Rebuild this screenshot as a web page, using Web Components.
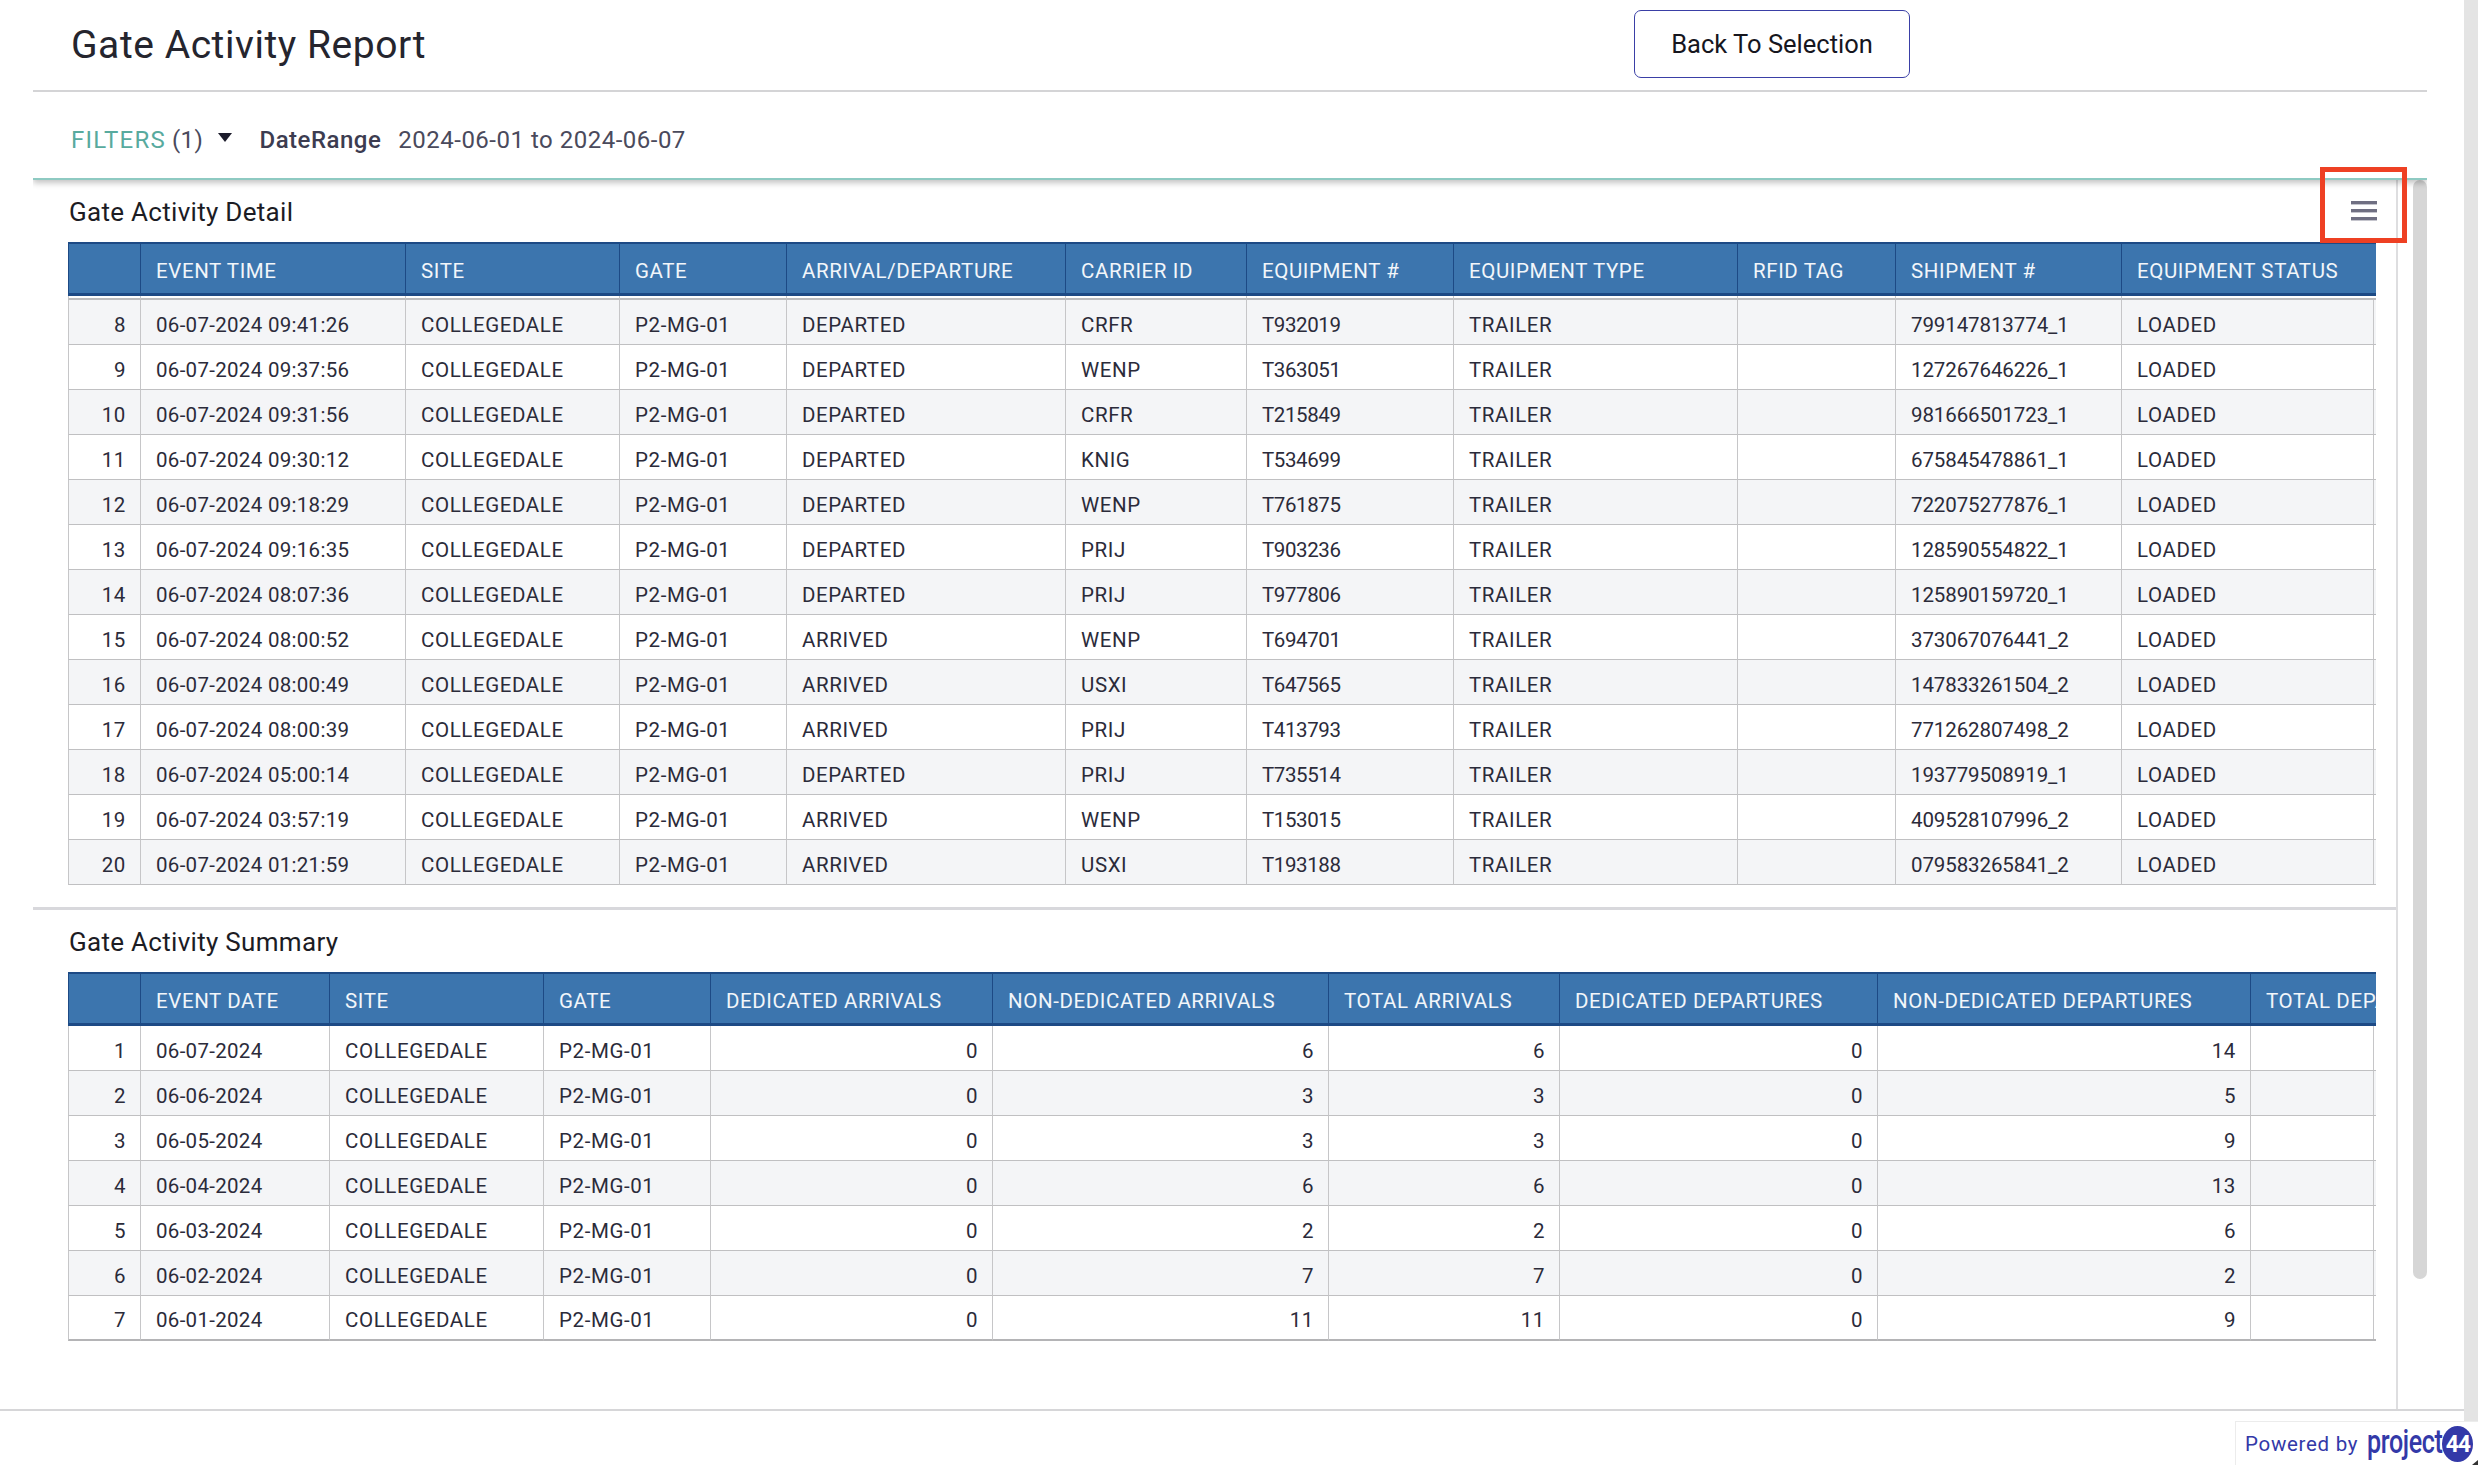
<!DOCTYPE html>
<html>
<head>
<meta charset="utf-8">
<title>Gate Activity Report</title>
<style>
    html, body { margin: 0; padding: 0; background: #fff; }
    body { font-family: Roboto, "Liberation Sans", sans-serif; color: #2b2b3a; overflow: hidden; }
</style>
</head>
<body>
<report-page></report-page>
<script>
const detailColumns = [
    { title: '', width: 72, num: true },
    { title: 'EVENT TIME', width: 265, ls: 0.3 },
    { title: 'SITE', width: 214 },
    { title: 'GATE', width: 167 },
    { title: 'ARRIVAL/DEPARTURE', width: 279 },
    { title: 'CARRIER ID', width: 181 },
    { title: 'EQUIPMENT #', width: 207, ls: -0.4 },
    { title: 'EQUIPMENT TYPE', width: 284 },
    { title: 'RFID TAG', width: 158 },
    { title: 'SHIPMENT #', width: 226, ls: -0.1 },
    { title: 'EQUIPMENT STATUS', width: 255 }
]
const detailRows = [
    ['8', '09:41:26', 'DEPARTED', 'CRFR', 'T932019', '799147813774_1'],
    ['9', '09:37:56', 'DEPARTED', 'WENP', 'T363051', '127267646226_1'],
    ['10', '09:31:56', 'DEPARTED', 'CRFR', 'T215849', '981666501723_1'],
    ['11', '09:30:12', 'DEPARTED', 'KNIG', 'T534699', '675845478861_1'],
    ['12', '09:18:29', 'DEPARTED', 'WENP', 'T761875', '722075277876_1'],
    ['13', '09:16:35', 'DEPARTED', 'PRIJ', 'T903236', '128590554822_1'],
    ['14', '08:07:36', 'DEPARTED', 'PRIJ', 'T977806', '125890159720_1'],
    ['15', '08:00:52', 'ARRIVED', 'WENP', 'T694701', '373067076441_2'],
    ['16', '08:00:49', 'ARRIVED', 'USXI', 'T647565', '147833261504_2'],
    ['17', '08:00:39', 'ARRIVED', 'PRIJ', 'T413793', '771262807498_2'],
    ['18', '05:00:14', 'DEPARTED', 'PRIJ', 'T735514', '193779508919_1'],
    ['19', '03:57:19', 'ARRIVED', 'WENP', 'T153015', '409528107996_2'],
    ['20', '01:21:59', 'ARRIVED', 'USXI', 'T193188', '079583265841_2']
].map(r => [r[0], '06-07-2024 ' + r[1], 'COLLEGEDALE', 'P2-MG-01', r[2], r[3], r[4], 'TRAILER', '', r[5], 'LOADED'])

const summaryColumns = [
    { title: '', width: 72, num: true },
    { title: 'EVENT DATE', width: 189, ls: 0.3 },
    { title: 'SITE', width: 214 },
    { title: 'GATE', width: 167 },
    { title: 'DEDICATED ARRIVALS', width: 282, num: true },
    { title: 'NON-DEDICATED ARRIVALS', width: 336, num: true },
    { title: 'TOTAL ARRIVALS', width: 231, num: true },
    { title: 'DEDICATED DEPARTURES', width: 318, num: true },
    { title: 'NON-DEDICATED DEPARTURES', width: 373, num: true },
    { title: 'TOTAL DEPARTURES', width: 126, num: true }
]
const summaryRows = [
    ['1', '06-07-2024', '0', '6', '6', '0', '14'],
    ['2', '06-06-2024', '0', '3', '3', '0', '5'],
    ['3', '06-05-2024', '0', '3', '3', '0', '9'],
    ['4', '06-04-2024', '0', '6', '6', '0', '13'],
    ['5', '06-03-2024', '0', '2', '2', '0', '6'],
    ['6', '06-02-2024', '0', '7', '7', '0', '2'],
    ['7', '06-01-2024', '0', '11', '11', '0', '9']
].map(r => [r[0], r[1], 'COLLEGEDALE', 'P2-MG-01', r[2], r[3], r[4], r[5], r[6], ''])

class ReportHeader extends HTMLElement{
    constructor(){
        super()
        this.attachShadow({mode : 'open'})
    }
    connectedCallback(){
        this.shadowRoot.innerHTML = `
            <style>
                :host{
                    display: flex;
                    height: 92px;
                    box-sizing: border-box;
                    border-bottom: 2px solid #d4d4d6;
                    padding-left: 38px;
                    padding-right: 517px;
                    align-items: center;
                    justify-content: space-between;
                }
                h1{
                    margin: 0;
                    font-size: 39px;
                    font-weight: 400;
                    letter-spacing: 0.55px;
                    color: #25252e;
                }
                button{
                    width: 276px;
                    height: 68px;
                    margin-bottom: 2px;
                    background: #fff;
                    border: 1.5px solid #3a3fa6;
                    border-radius: 7px;
                    font: 400 25.5px Roboto, sans-serif;
                    color: #16161e;
                    padding: 0;
                }
            </style>
            <h1>Gate Activity Report</h1>
            <button>Back To Selection</button>
        `
    }
}

class FilterBar extends HTMLElement{
    constructor(){
        super()
        this.attachShadow({mode : 'open'})
    }
    connectedCallback(){
        this.shadowRoot.innerHTML = `
            <style>
                :host{
                    display: flex;
                    position: relative;
                    height: 88px;
                    box-sizing: border-box;
                    border-bottom: 2px solid #8ecac2;
                    box-shadow: 0 3px 6px rgba(0,0,0,.24);
                    clip-path: inset(0 0 -12px 0);
                    background: #fff;
                    padding-left: 38px;
                    padding-top: 9px;
                    align-items: center;
                    font-size: 24px;
                    letter-spacing: 0.5px;
                    color: #4a4a5c;
                }
                .label{ color: #58aa9e; letter-spacing: 1.2px; }
                .count{ margin-left: 6px; }
                .arrow{
                    width: 0;
                    height: 0;
                    margin: 0 27px 4px 15px;
                    border-left: 7px solid transparent;
                    border-right: 7px solid transparent;
                    border-top: 9px solid #1c1c2c;
                }
                .name{ font-weight: 500; color: #3c3c50; margin-right: 17px; }
            </style>
            <span class="label">FILTERS</span>
            <span class="count">(1)</span>
            <span class="arrow"></span>
            <span class="name">DateRange</span>
            <span>2024-06-01 to 2024-06-07</span>
        `
    }
}

class MenuButton extends HTMLElement{
    constructor(){
        super()
        this.attachShadow({mode : 'open'})
    }
    connectedCallback(){
        this.shadowRoot.innerHTML = `
            <style>
                :host{
                    display: block;
                    position: relative;
                    width: 26px;
                    height: 20px;
                    margin-right: -1px;
                    margin-top: -1px;
                }
                svg{ display: block; }
                .mark{
                    position: absolute;
                    left: -31px;
                    top: -34px;
                    width: 87px;
                    height: 76px;
                    box-sizing: border-box;
                    border: 5px solid #ee4023;
                }
            </style>
            <svg width="26" height="20" viewBox="0 0 26 20">
                <rect x="0" y="0" width="26" height="3.4" fill="#6f6f82"/>
                <rect x="0" y="8" width="26" height="3.4" fill="#6f6f82"/>
                <rect x="0" y="16" width="26" height="3.4" fill="#6f6f82"/>
            </svg>
            <div class="mark"></div>
        `
    }
}

class DataGrid extends HTMLElement{
    constructor(){
        super()
        this.attachShadow({mode : 'open'})
    }
    set config(value){
        this._config = value
        this.render()
    }
    getStyles(){
        return `
            <style>
                :host{
                    display: block;
                    width: 2308px;
                    overflow: hidden;
                }
                table{
                    border-collapse: separate;
                    border-spacing: 0;
                    table-layout: fixed;
                    width: 2308px;
                    font-size: 20.5px;
                    letter-spacing: 0.6px;
                    color: #2b2b3a;
                }
                th, td{
                    box-sizing: border-box;
                    padding: 0 14px 0 15px;
                    white-space: nowrap;
                    overflow: hidden;
                    font-weight: 400;
                    text-align: left;
                }
                th{
                    background: #3c75ae;
                    color: #f2f6fa;
                    border-top: 2px solid #1d4a85;
                    border-bottom: 3px solid #1d4a85;
                    border-left: 1px solid #1d4a85;
                    padding-top: 5px;
                    padding-right: 0;
                }
                td{
                    height: 45px;
                    padding-top: 5px;
                    border-bottom: 1.5px solid #c0c0c2;
                    border-left: 1px solid #c6c6c8;
                }
                td.num{ text-align: right; }
                tr.stripe td{ background-color: #f4f5f7; }
                td.last{
                    background-image: linear-gradient(#c6c6c8, #c6c6c8);
                    background-size: 1px 100%;
                    background-position: right 2px top;
                    background-repeat: no-repeat;
                }
                tr.gap td{
                    height: ${this._config.gap}px;
                    padding: 0;
                    border-bottom: 2px solid #bcbcbe;
                }
                tr.end td{ border-bottom: 2px solid #b4b4b6; }
            </style>
        `
    }
    render(){
        const { columns, rows, headHeight, gap } = this._config
        const cols = columns.map(c => `<col style="width:${c.width}px">`).join('')
        const head = columns.map(c => `<th style="height:${headHeight}px">${c.title}</th>`).join('')
        const spacer = gap ? `<tr class="gap">${columns.map(() => '<td></td>').join('')}</tr>` : ''
        const body = rows.map((row, r) => {
            const stripe = Number(row[0]) % 2 === 0 ? 'stripe' : ''
            const end = r === rows.length - 1 && !gap ? 'end' : ''
            const cells = row.map((text, i) => {
                const cls = (columns[i].num ? 'num ' : '') + (i === row.length - 1 ? 'last' : '')
                const ls = columns[i].ls !== undefined ? ` style="letter-spacing:${columns[i].ls}px"` : ''
                return `<td class="${cls}"${ls}>${text}</td>`
            }).join('')
            return `<tr class="${stripe} ${end}">${cells}</tr>`
        }).join('')
        this.shadowRoot.innerHTML = `
            ${this.getStyles()}
            <table>
                <colgroup>${cols}</colgroup>
                <thead><tr>${head}</tr></thead>
                <tbody>${spacer}${body}</tbody>
            </table>
        `
    }
}

class ReportSection extends HTMLElement{
    constructor(){
        super()
        this.attachShadow({mode : 'open'})
    }
    connectedCallback(){
        this.shadowRoot.innerHTML = `
            <style>
                :host{
                    display: block;
                    padding: 0 20px 0 35px;
                }
                .head{
                    display: flex;
                    align-items: center;
                    justify-content: space-between;
                    height: var(--head-height, 62px);
                }
                h2{
                    margin: 0 0 0 1px;
                    padding-top: 1px;
                    font-size: 26px;
                    font-weight: 400;
                    letter-spacing: 0.3px;
                    color: #1c1c24;
                }
            </style>
            <div class="head">
                <h2>${this.getAttribute('heading')}</h2>
                <slot name="action"></slot>
            </div>
            <slot></slot>
        `
    }
}

class PoweredBy extends HTMLElement{
    constructor(){
        super()
        this.attachShadow({mode : 'open'})
    }
    connectedCallback(){
        this.shadowRoot.innerHTML = `
            <style>
                :host{
                    display: flex;
                    position: relative;
                    width: 243px;
                    height: 44px;
                    box-sizing: border-box;
                    border-top: 1px solid #ececec;
                    border-left: 1px solid #ececec;
                    padding-left: 9px;
                    align-items: center;
                    color: #3339a8;
                }
                .by{
                    font-size: 20.5px;
                    letter-spacing: 0.7px;
                    margin-right: 9px;
                    white-space: nowrap;
                }
                .project{
                    display: inline-block;
                    font-size: 33px;
                    font-weight: 500;
                    letter-spacing: -0.5px;
                    transform: scaleX(.76);
                    transform-origin: left center;
                    margin-right: -24px;
                    margin-top: -4px;
                    white-space: nowrap;
                }
                .badge{
                    display: flex;
                    width: 31px;
                    height: 36px;
                    border-radius: 50%;
                    background: #3339a8;
                    color: #fff;
                    font-size: 23px;
                    font-weight: 700;
                    letter-spacing: -1px;
                    align-items: center;
                    justify-content: center;
                    margin-top: 1px;
                }
                .corner{
                    position: absolute;
                    right: 0;
                    bottom: 0;
                    width: 0;
                    height: 0;
                    border-left: 6px solid transparent;
                    border-bottom: 5px solid #333;
                }
            </style>
            <span class="by">Powered by</span>
            <span class="project">project</span>
            <span class="badge">44</span>
            <span class="corner"></span>
        `
    }
}

class ReportPage extends HTMLElement{
    constructor(){
        super()
        this.attachShadow({mode : 'open'})
    }
    connectedCallback(){
        this.shadowRoot.innerHTML = `
            <style>
                :host{
                    display: flex;
                    flex-direction: column;
                    width: 2478px;
                    height: 1465px;
                    background: #fff;
                }
                .top{
                    display: flex;
                    height: 1421px;
                }
                .main{
                    width: 2464px;
                    height: 1421px;
                }
                .heads{
                    margin-left: 33px;
                    width: 2394px;
                }
                .body{
                    display: flex;
                    height: 1231px;
                    box-sizing: border-box;
                    border-bottom: 2px solid #d6d6d8;
                }
                .panel{
                    width: 2365px;
                    margin-left: 33px;
                    box-sizing: border-box;
                    border-right: 2px solid #dedee0;
                }
                .thumb{
                    width: 14px;
                    height: 1099px;
                    margin-left: 15px;
                    background: #d6d6d6;
                    border-radius: 7px;
                }
                hr{
                    margin: 22px 0 0 0;
                    border: 0;
                    border-top: 3px solid #d8d8dc;
                }
                .page-bar{
                    width: 14px;
                    background: #e4e4e4;
                }
                .foot{
                    display: flex;
                    justify-content: flex-end;
                    height: 44px;
                }
            </style>
            <div class="top">
                <div class="main">
                    <div class="heads">
                        <report-header></report-header>
                        <filter-bar></filter-bar>
                    </div>
                    <div class="body">
                        <div class="panel">
                            <report-section heading="Gate Activity Detail">
                                <menu-button slot="action"></menu-button>
                                <data-grid id="detail"></data-grid>
                            </report-section>
                            <hr>
                            <report-section heading="Gate Activity Summary">
                                <data-grid id="summary"></data-grid>
                            </report-section>
                        </div>
                        <div class="thumb"></div>
                    </div>
                </div>
                <div class="page-bar"></div>
            </div>
            <div class="foot"><powered-by></powered-by></div>
        `
        this.shadowRoot.getElementById('detail').config = { columns: detailColumns, rows: detailRows, headHeight: 54, gap: 4 }
        this.shadowRoot.getElementById('summary').config = { columns: summaryColumns, rows: summaryRows, headHeight: 54, gap: 0 }
    }
}

customElements.define('report-header', ReportHeader)
customElements.define('filter-bar', FilterBar)
customElements.define('menu-button', MenuButton)
customElements.define('data-grid', DataGrid)
customElements.define('report-section', ReportSection)
customElements.define('powered-by', PoweredBy)
customElements.define('report-page', ReportPage)
</script>
</body>
</html>
